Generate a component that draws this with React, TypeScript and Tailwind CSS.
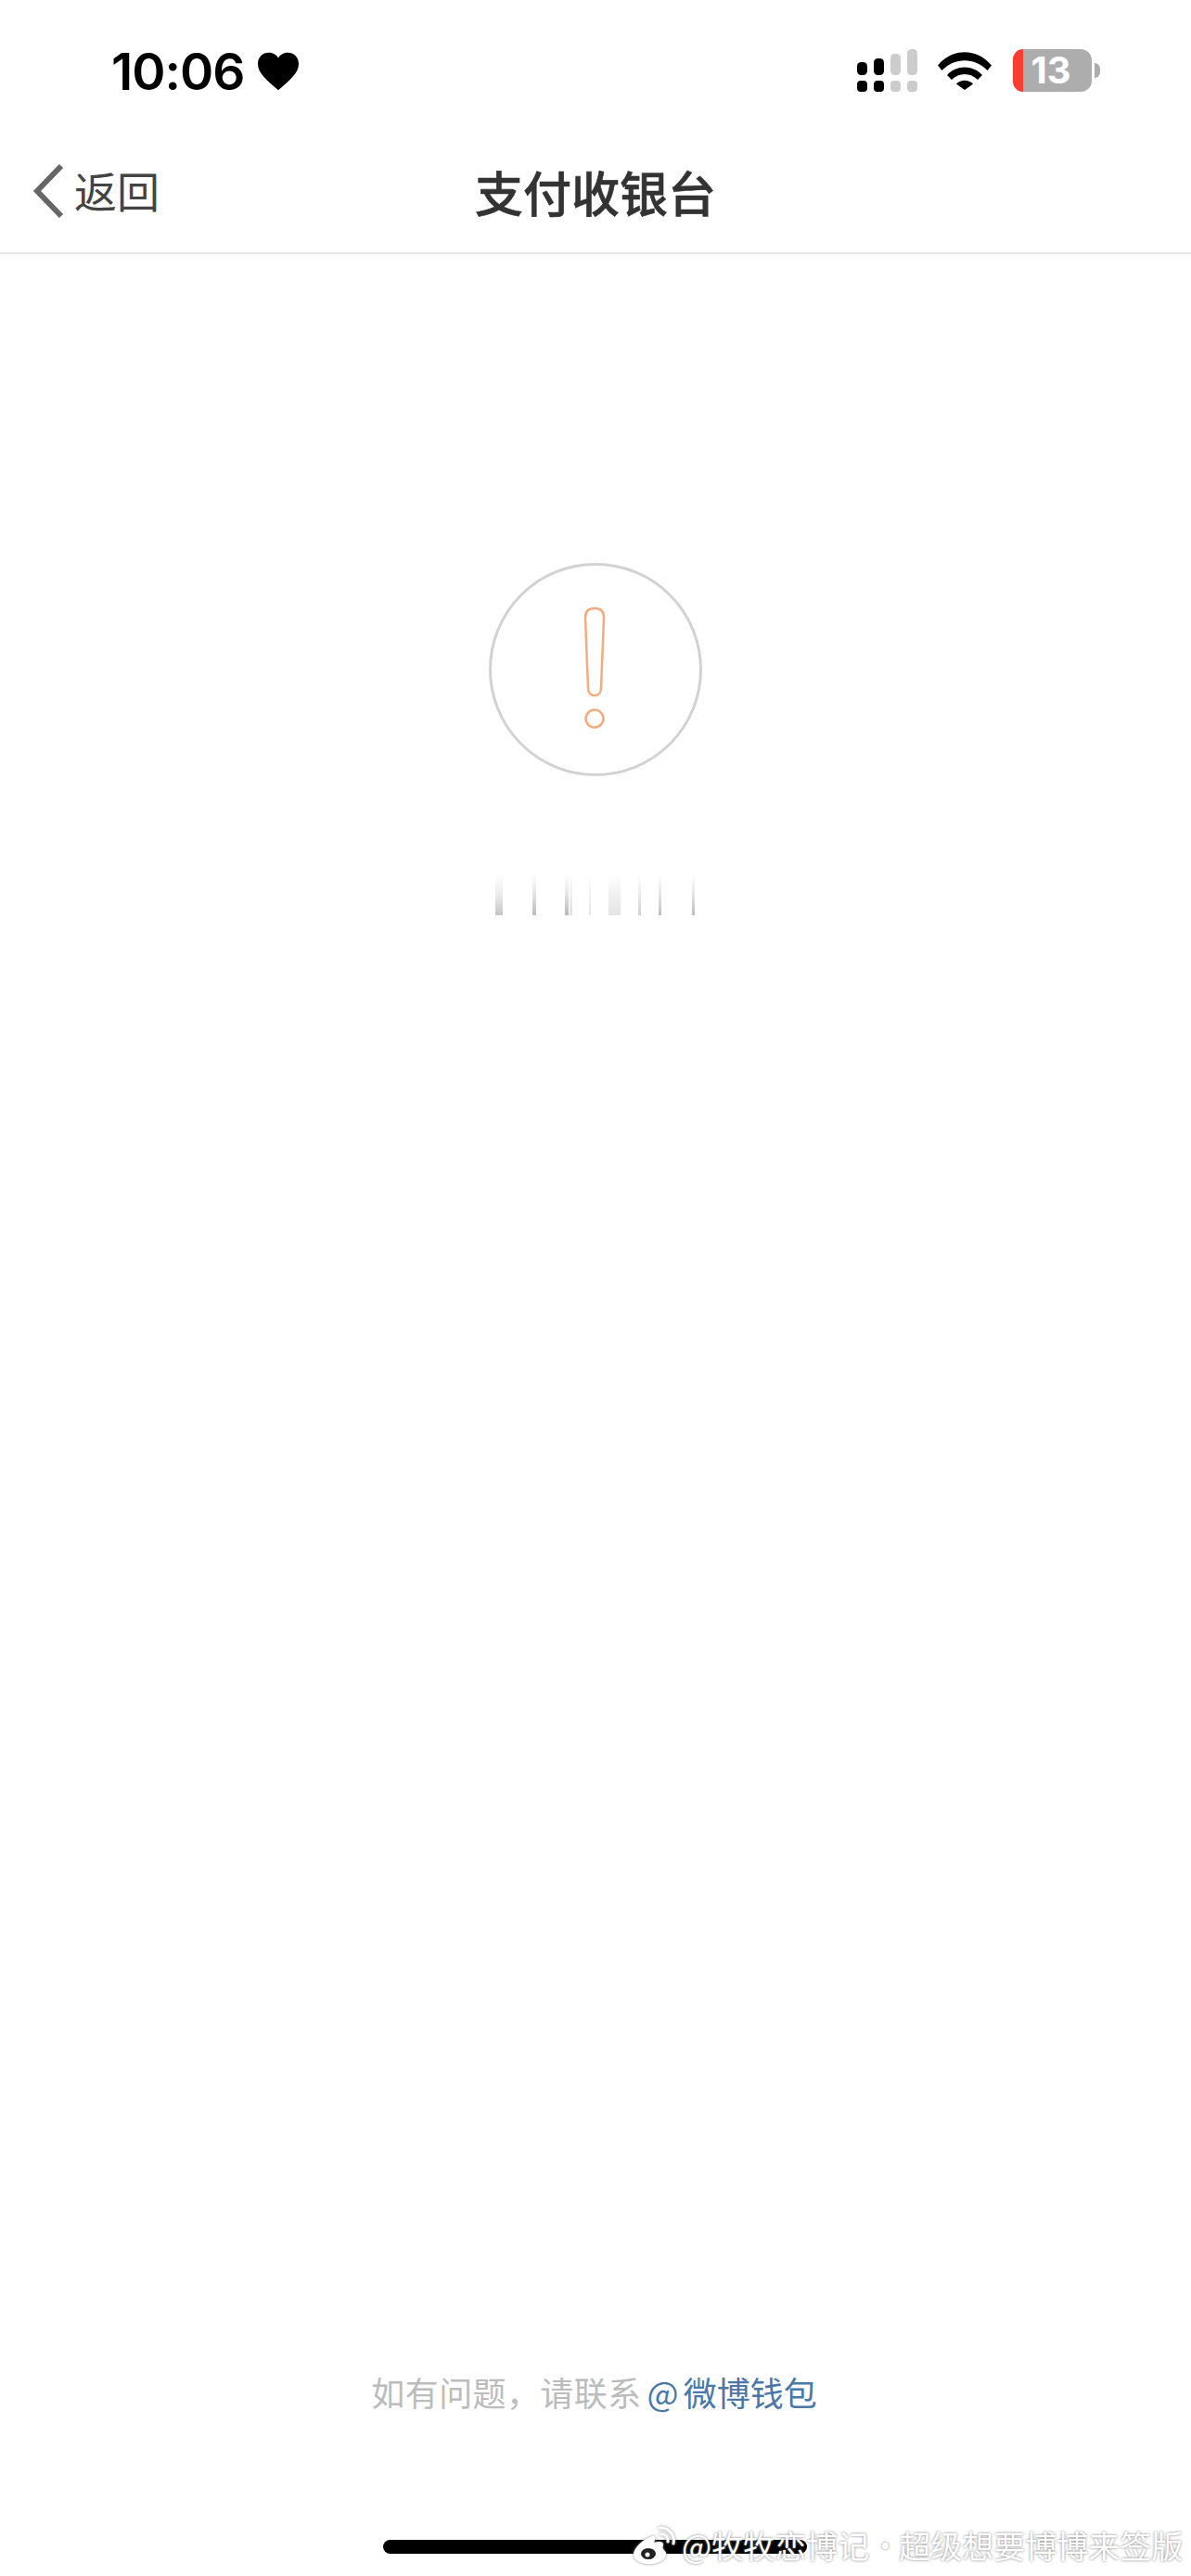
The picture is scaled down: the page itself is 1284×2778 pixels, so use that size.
const cjk = "font-['Noto_Sans_CJK_SC','Noto_Sans',sans-serif]";

// 状态栏右侧图标
function StatusIcons() {
  return (
    <div className="flex items-center mr-[98px] mt-[1px]">
      <svg width="66" height="46" viewBox="0 0 66 46" className="mr-[21px]">
        <rect x="0" y="14" width="11" height="14" rx="4.5" fill="#000" />
        <rect x="0" y="34" width="11" height="12" rx="4" fill="#000" />
        <rect x="18" y="10" width="11" height="18" rx="4.5" fill="#000" />
        <rect x="18" y="34" width="11" height="12" rx="4" fill="#000" />
        <rect x="36" y="5" width="11" height="23" rx="4.5" fill="#ccc" />
        <rect x="36" y="34" width="11" height="12" rx="4" fill="#ccc" />
        <rect x="54" y="0" width="11" height="28" rx="4.500" fill="#ccc" />
        <rect x="54" y="34" width="11" height="12" rx="4" fill="#ccc" />
      </svg>
      <svg width="58" height="42" viewBox="0 0 58 42" className="mr-[23px]">
        <path d="M0 15.500C16 -3.500 42 -3.500 58 15.500L53.500 21C40 6.500 18 6.500 4.500 21Z" fill="#000" />
        <path d="M10 26C20 14.500 38 14.500 48 26L43 31C35.500 23 22.500 23 15 31Z" fill="#000" />
        <path d="M20 35.500C25 30.500 33 30.500 38 35.500L29 42Z" fill="#000" />
      </svg>
      <div className="flex items-center">
        <div className="w-[85px] h-[46px] flex">
          <div className="w-[11px] rounded-l-[12px] bg-[#fb3d30]" />
          <div className="flex-1 rounded-r-[12px] bg-[#adadad] flex items-center justify-center pr-[14px]">
            <span className="text-white font-['Inter',sans-serif] font-bold text-[40px] leading-none">13</span>
          </div>
        </div>
        <div className="w-[6px] h-[16px] ml-[3px] rounded-r-full bg-[#adadad]" />
      </div>
    </div>
  );
}

export default function App() {
  return (
    <div className={`relative min-h-[2778px] bg-white flex flex-col ${cjk}`}>
      {/* 状态栏 */}
      <div className="h-[150px] flex items-center justify-between">
        <div className="flex items-center ml-[120px] mt-[4px]">
          <span className="font-['Inter',sans-serif] font-semibold text-[55px] leading-none tracking-[-1px] text-black">10:06</span>
          <svg width="44" height="42" viewBox="0 0 24 22" className="ml-[14px]">
            <path d="M12 22C5 16 0 12 0 6.500C0 2.500 3 0 6.500 0C9 0 11 1.300 12 3.200C13 1.300 15 0 17.500 0C21 0 24 2.500 24 6.500C24 12 19 16 12 22Z" fill="#000" />
          </svg>
        </div>
        <StatusIcons />
      </div>

      {/* 导航栏 */}
      <div className="relative h-[124px] border-b-2 border-[#e8e8e8] flex items-center justify-center">
        <div className="absolute left-[35px] top-[26px] flex items-center">
          <svg width="34" height="60" viewBox="0 0 34 60">
            <path d="M31 3L5 30L31 57" fill="none" stroke="#666" strokeWidth="6" />
          </svg>
          <span className="ml-[11px] text-[46px] leading-none text-[#444] -mt-[5px]">返回</span>
        </div>
        <h1 className="text-[52px] leading-none font-medium [-webkit-text-stroke:0.6px_#333] text-[#333] mb-[9px]">支付收银台</h1>
      </div>

      {/* 错误提示 */}
      <div className="flex flex-col items-center pt-[333px]">
        <div className="w-[230px] h-[230px] rounded-full border-[3px] border-[#d2d2d2] flex items-center justify-center">
          <svg width="24" height="134" viewBox="0 0 24 134" className="mr-[3px] mb-[3px]">
            <path d="M2 12C2 5 6 2 12 2C18 2 22 5 22 12L19 88C19 93 16 96 12 96C8 96 5 93 5 88Z" fill="none" stroke="#f5ab7c" strokeWidth="2.500" />
            <circle cx="12" cy="121" r="9.500" fill="none" stroke="#f5ab7c" strokeWidth="2.500" />
          </svg>
        </div>
        {/* 加载中的残影 */}
        <div className="mt-[106px] h-[44px] w-[216px] flex items-stretch">
          <div className="w-[8px] ml-0 bg-gradient-to-b from-white via-[#ececec] to-[#c4c4c4]" />
          <div className="w-[4px] ml-[32px] bg-gradient-to-b from-white via-[#e4e4e4] to-[#bcbcbc]" />
          <div className="w-[4px] ml-[31px] bg-gradient-to-b from-white via-[#e4e4e4] to-[#b8b8b8]" />
          <div className="w-[3px] ml-[1px] bg-gradient-to-b from-white via-[#f0f0f0] to-[#e0e0e0]" />
          <div className="w-[2px] ml-[18px] bg-gradient-to-b from-white via-[#f2f2f2] to-[#e6e6e6]" />
          <div className="w-[13px] ml-[19px] bg-gradient-to-b from-white via-[#f0f0f0] to-[#e4e4e4]" />
          <div className="w-[3px] ml-[19px] bg-gradient-to-b from-white via-[#eaeaea] to-[#d2d2d2]" />
          <div className="w-[3px] ml-[19px] bg-gradient-to-b from-white via-[#e4e4e4] to-[#c0c0c0]" />
          <div className="w-[3px] ml-[33px] bg-gradient-to-b from-white via-[#e4e4e4] to-[#bcbcbc]" />
        </div>
      </div>

      {/* 底部联系方式 */}
      <div className="mt-auto flex justify-center pb-[176px]">
        <p className="text-[36px] leading-[46px] text-[#bcbcbc] tracking-[0.4px] mr-[3px]">
          如有问题，请联系
          <span className="ml-[6px] text-[#4a78a8] tracking-normal">
            <span className="mr-[5px]">@</span>微博钱包
          </span>
        </p>
      </div>

      {/* Home 指示条 */}
      <div className="absolute left-[413px] bottom-[24px] w-[457px] h-[15px] rounded-full bg-black" />

      {/* 微博水印 */}
      <div className="absolute left-[682px] bottom-[12px] flex items-center text-[34px] leading-none text-white [text-shadow:0_0_3px_#777]">
        <svg width="48" height="42" viewBox="0 0 48 42" className="mr-[5px] [filter:drop-shadow(0_0_1.5px_#888)]">
          <path d="M21 11C10 15 1 24 1 31C1 38 11 42 21 41C31 40 37 35 36 29C35 26 31 25 33 21C34 17 29 16 23 18C25 13 25 10 21 11Z" fill="#fff" />
          <ellipse cx="17" cy="30" rx="9" ry="7" fill="#222" stroke="#fff" strokeWidth="2" />
          <circle cx="16" cy="31" r="2.500" fill="#fff" />
          <path d="M29 2C38 1 46 9 44 19M30 9C34 8 39 12 38 17" fill="none" stroke="#fff" strokeWidth="3" strokeLinecap="round" />
        </svg>
        <span>@牧牧恋博记</span>
        <span className="w-[32px] text-center">·</span>
        <span>超级想要博博来签版</span>
      </div>
    </div>
  );
}
